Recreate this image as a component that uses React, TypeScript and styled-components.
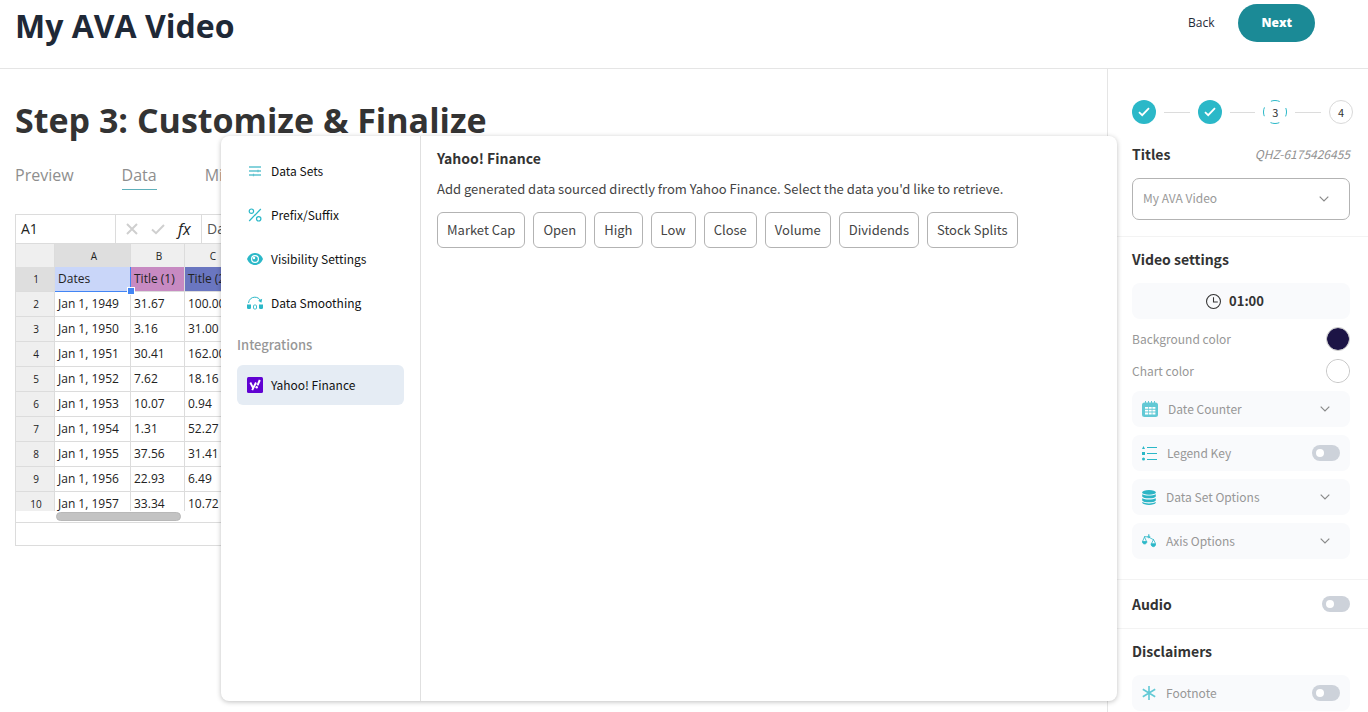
import React from 'react';
import styled, { createGlobalStyle, css } from 'styled-components';

const teal = '#2bb8c8';
const sans = "'Open Sans', 'Noto Sans', sans-serif";
const ui = "'Noto Sans CJK JP', 'Noto Sans', sans-serif";

const GlobalStyle = createGlobalStyle`
  *, *::before, *::after { box-sizing: border-box; }
  body { margin: 0; background: #fff; color: #333; font: 12px/20px ${ui}; }
  button, input, select { font: inherit; color: inherit; margin: 0; }
  button { background: none; border: 0; padding: 0; cursor: pointer; }
  h1, h2, h3, p { margin: 0; }
  svg { display: block; flex: none; }
`;

const Page = styled.div`
  display: flex;
  flex-direction: column;
  min-height: 100vh;
`;

const Header = styled.header`
  display: flex;
  align-items: flex-start;
  justify-content: space-between;
  height: 69px;
  padding: 4px 53px 0 15px;
  border-bottom: 1px solid #e5e5e5;
`;

const VideoTitle = styled.h1`
  font: 700 32px/44px ${sans};
  color: #1f2937;
`;

const HeaderActions = styled.div`
  display: flex;
  align-items: center;
  gap: 24px;
  font: 12px/20px ${sans};
`;

const BackButton = styled.button`
  color: #1f2937;
`;

const NextButton = styled.button`
  height: 38px;
  padding: 0 23px;
  border-radius: 19px;
  background: #1b8a96;
  color: #fff;
  font-weight: 800;
`;

const Body = styled.div`
  position: relative;
  display: flex;
  flex: 1;
`;

const Workspace = styled.main`
  flex: 1;
  min-width: 0;
  padding: 28px 15px 0;
`;

const StepTitle = styled.h2`
  font: 700 34px/46px ${sans};
  color: #333;
`;

const Tabs = styled.nav`
  display: flex;
  gap: 48px;
  margin-top: 20px;
`;

const Tab = styled.a<{ $active?: boolean }>`
  font: 16px/24px ${sans};
  color: #8e8e8e;
  text-decoration: none;
  padding-bottom: 2px;
  border-bottom: 1px solid ${(p) => (p.$active ? '#5fb0bb' : 'transparent')};
`;

const Sheet = styled.section`
  margin-top: 24px;
  height: 332px;
  border: 1px solid #dcdcdc;
  font-family: ${sans};
  color: #222;
`;

const FormulaBar = styled.div`
  display: flex;
  align-items: center;
  height: 28px;
`;

const CellName = styled.div`
  width: 100px;
  padding-left: 5px;
  border-right: 1px solid #dcdcdc;
  font-size: 14px;
  line-height: 28px;
`;

const FormulaTools = styled.div`
  display: flex;
  align-items: center;
  gap: 13px;
  width: 86px;
  height: 28px;
  padding-left: 10px;
  border-right: 1px solid #dcdcdc;
`;

const Fx = styled.i`
  font: italic 500 16px/20px ${sans};
`;

const FormulaValue = styled.span`
  padding-left: 5px;
  font-size: 14px;
  color: #555;
`;

const SheetViewport = styled.div`
  height: 268px;
  overflow: hidden;
`;

const Grid = styled.table`
  width: 223px;
  table-layout: fixed;
  border-collapse: separate;
  border-spacing: 0;
`;

const ColumnHead = styled.th<{ $width: number; $selected?: boolean }>`
  width: ${(p) => p.$width}px;
  height: 24px;
  padding: 0 0 0 3px;
  border-top: 1px solid #dcdcdc;
  border-right: 1px solid #dcdcdc;
  background: ${(p) => (p.$selected ? '#dedede' : '#efefef')};
  font-size: 10px;
  font-weight: 400;
`;

const RowHead = styled.th<{ $selected?: boolean }>`
  padding: 0 0 0 2px;
  border-right: 1px solid #dcdcdc;
  border-bottom: 1px solid #dcdcdc;
  background: ${(p) => (p.$selected ? '#dedede' : '#efefef')};
  font-size: 10px;
  font-weight: 400;
`;

const Cell = styled.td<{ $fill?: string; $selected?: boolean }>`
  position: relative;
  height: 25px;
  padding: 0 0 0 3px;
  border-right: 1px solid #dcdcdc;
  border-bottom: 1px solid #dcdcdc;
  background: ${(p) => p.$fill ?? '#fff'};
  font-size: 12px;
  line-height: 22px;
  white-space: nowrap;
  ${(p) =>
    p.$selected &&
    css`
      border-right-color: #4285f4;
      border-bottom-color: #4285f4;
    `}
`;

const FillHandle = styled.span`
  position: absolute;
  right: -5px;
  bottom: -4px;
  z-index: 1;
  width: 8px;
  height: 8px;
  border: 1px solid #fff;
  background: #4285f4;
`;

const ScrollTrack = styled.div`
  height: 12px;
  padding: 1px 0 0 40px;
  border-bottom: 1px solid #dcdcdc;
`;

const ScrollThumb = styled.div`
  width: 125px;
  height: 9px;
  border: 1px solid #b8b8b8;
  border-radius: 5px;
  background: #c3c3c3;
`;

const Sidebar = styled.aside`
  flex: none;
  width: 261px;
  padding-top: 31px;
  border-left: 1px solid #e5e5e5;
`;

const Stepper = styled.ol`
  display: flex;
  align-items: center;
  gap: 8px;
  width: 221px;
  margin: 0 0 20px 24px;
  padding: 0;
  list-style: none;
`;

const Step = styled.li<{ $state: 'done' | 'current' | 'todo' }>`
  position: relative;
  display: grid;
  place-items: center;
  flex: none;
  width: 24px;
  height: 24px;
  border-radius: 50%;
  border: ${(p) => (p.$state === 'todo' ? '1px solid #d9d9d9' : '0')};
  background: ${(p) => (p.$state === 'done' ? teal : 'transparent')};
  font-size: 11px;
  line-height: 16px;
  color: #333;
`;

const StepRing = styled.svg`
  position: absolute;
  inset: 0;
`;

const StepLine = styled.li`
  flex: 1;
  height: 1px;
  background: #dcdcdc;
`;

const Section = styled.section<{ $divided?: boolean }>`
  display: flex;
  flex-direction: column;
  gap: 8px;
  padding: 0 18px 20px 24px;
  ${(p) =>
    p.$divided &&
    css`
      padding-top: 12px;
      border-top: 1px solid #f3f3f3;
    `}
`;

const TitleSection = styled(Section)`
  padding-bottom: 16px;
`;

const LastSection = styled(Section)`
  padding-bottom: 0;
`;

const AudioSection = styled(Section)`
  padding-bottom: 12px;
`;

const SectionHead = styled.div<{ $flat?: boolean }>`
  display: flex;
  align-items: center;
  justify-content: space-between;
  height: ${(p) => (p.$flat ? 24 : 20)}px;
  margin-bottom: ${(p) => (p.$flat ? 0 : 6)}px;
`;

const SectionTitle = styled.h3`
  font-size: 14px;
  line-height: 20px;
  font-weight: 700;
  color: #333;
`;

const Reference = styled.em`
  color: #929292;
`;

const SelectBox = styled.div`
  display: grid;
  align-items: center;
  & > * { grid-area: 1 / 1; }
  & > svg { justify-self: end; margin-right: 21px; pointer-events: none; }
`;

const TitleSelect = styled.select`
  appearance: none;
  width: 100%;
  height: 42px;
  padding: 0 32px 2px 10px;
  border: 1px solid #b3b3b3;
  border-radius: 7px;
  background: #fff;
  color: #999;
`;

const panel = css`
  display: flex;
  align-items: center;
  width: 100%;
  height: 36px;
  border-radius: 8px;
  background: #f9fafc;
`;

const Duration = styled.button`
  ${panel}
  justify-content: center;
  gap: 8px;
  padding-right: 12px;
  font-size: 13px;
  font-weight: 700;
  color: #333;
`;

const Option = styled.button`
  ${panel}
  gap: 10px;
  padding: 0 20px 0 10px;
  color: #979797;
`;

const ToggleOption = styled.label`
  ${panel}
  gap: 10px;
  padding: 0 10px;
  color: #979797;
`;

const OptionText = styled.span`
  flex: 1;
  text-align: left;
`;

const ColorRow = styled.label`
  display: flex;
  align-items: center;
  justify-content: space-between;
  height: 24px;
  color: #979797;
`;

const ColorInput = styled.input`
  appearance: none;
  width: 24px;
  height: 24px;
  padding: 0;
  border: 1px solid #c4c4c4;
  border-radius: 50%;
  background: none;
  overflow: hidden;
  &::-webkit-color-swatch-wrapper { padding: 0; }
  &::-webkit-color-swatch { border: 0; border-radius: 50%; }
`;

const Toggle = styled.input`
  appearance: none;
  flex: none;
  width: 28px;
  height: 16px;
  padding: 4px;
  border-radius: 8px;
  background: #cdd2da;
  &::before {
    content: '';
    display: block;
    width: 8px;
    height: 8px;
    border-radius: 50%;
    background: #fff;
  }
  &:checked { background: ${teal}; }
  &:checked::before { margin-left: auto; }
`;

const Dialog = styled.div`
  position: absolute;
  top: 67px;
  right: 251px;
  bottom: 11px;
  left: 221px;
  z-index: 2;
  display: flex;
  border-radius: 8px;
  background: #fff;
  box-shadow: 0 1px 5px rgba(0, 0, 0, 0.25);
`;

const DialogNav = styled.nav`
  display: flex;
  flex-direction: column;
  gap: 4px;
  width: 200px;
  padding: 15px 16px;
  border-right: 1px solid #e0e0e0;
`;

const NavItem = styled.button<{ $active?: boolean }>`
  display: flex;
  align-items: center;
  gap: 8px;
  height: 40px;
  padding: 0 10px;
  border-radius: 6px;
  background: ${(p) => (p.$active ? '#e5ecf4' : 'transparent')};
  color: #111;
`;

const NavLabel = styled.h3`
  margin: 8px 0 6px;
  font-size: 13px;
  line-height: 20px;
  font-weight: 500;
  color: #979797;
`;

const DialogContent = styled.div`
  flex: 1;
  padding: 12px 16px;
`;

const DialogTitle = styled.h2`
  font-size: 14px;
  line-height: 20px;
  font-weight: 700;
`;

const DialogText = styled.p`
  margin: 10px 0 12px;
  font-size: 13px;
  line-height: 22px;
  color: #444;
`;

const Fields = styled.div`
  display: flex;
  flex-wrap: wrap;
  gap: 8px;
`;

const FieldButton = styled.button`
  height: 36px;
  padding: 0 9px;
  border: 1px solid #b3b3b3;
  border-radius: 6px;
  font-size: 13px;
  color: #444;
`;

const Chevron = () => (
  <svg width="10" height="6" viewBox="0 0 10 6" fill="none" stroke="#8a8a8a" strokeWidth="1.2">
    <path d="M.7.7 5 5 9.3.7" />
  </svg>
);

const Check = () => (
  <svg width="12" height="10" viewBox="0 0 12 10" fill="none" stroke="#fff" strokeWidth="1.8">
    <path d="M1 5.2 4.2 8.2 11 1.2" />
  </svg>
);

const DataSetsIcon = () => (
  <svg width="16" height="16" viewBox="0 0 16 16" stroke="#5fc3cf" strokeWidth="1.4">
    <path d="M2 4h12M2 8h12M2 12h12" fill="none" />
    <path d="M11 6.700v2.600M6.500 10.700v2.600" strokeWidth="1.200" />
  </svg>
);

const PercentIcon = () => (
  <svg width="16" height="16" viewBox="0 0 16 16" fill="none" stroke={teal} strokeWidth="1.2">
    <circle cx="4.400" cy="4.200" r="2.200" />
    <circle cx="11.700" cy="11.800" r="2.200" />
    <path d="M13.800 2 2.200 14" />
  </svg>
);

const EyeIcon = () => (
  <svg width="16" height="16" viewBox="0 0 16 16">
    <path d="M0 8c1.400-3.700 4.400-6 8-6s6.600 2.300 8 6c-1.400 3.700-4.400 6-8 6S1.400 11.700 0 8Z" fill={teal} />
    <circle cx="8" cy="8" r="4" fill="#fff" />
    <circle cx="8" cy="8" r="2.800" fill={teal} />
    <circle cx="7" cy="7" r="1.200" fill="#fff" />
  </svg>
);

const SmoothingIcon = () => (
  <svg width="16" height="16" viewBox="0 0 16 16" fill={teal}>
    <path d="M1.500 8C2 4.200 4.600 2.200 7.800 2.200c2.600 0 4.600 1.300 5.600 3.400" fill="none" stroke={teal} />
    <path d="m15.200 3.800-.8 4-3.200-2Z" />
    <path d="M0 9.500h4v3.200a1.300 1.300 0 0 1-1.300 1.300H1.300A1.300 1.300 0 0 1 0 12.700ZM12 9.500h4v3.200a1.300 1.300 0 0 1-1.300 1.300h-1.400a1.300 1.300 0 0 1-1.300-1.300Z" />
    <rect x="6.500" y="10" width="3" height="4" rx="1" fill="none" stroke={teal} strokeWidth=".9" />
  </svg>
);

const YahooIcon = () => (
  <svg width="16" height="16" viewBox="0 0 16 16">
    <rect width="16" height="16" rx="1.500" fill="#6001d2" />
    <path d="m3.300 5.500 2.600 5.200M9 5.500l-3.800 7.700" stroke="#fff" strokeWidth="1.900" fill="none" />
    <path d="m12.800 3-2.300 5.400" stroke="#fff" strokeWidth="2" />
    <circle cx="9.700" cy="10.300" r="1.200" fill="#fff" />
  </svg>
);

const ClockIcon = () => (
  <svg width="15" height="15" viewBox="0 0 14 14" fill="none" stroke="#333" strokeWidth="1">
    <circle cx="7" cy="7" r="6.500" />
    <path d="M7 3v4.500h4" />
  </svg>
);

const CalendarIcon = () => (
  <svg width="16" height="16" viewBox="0 0 16 16">
    <path d="M3.500 0v3M6.500 0v3M9.500 0v3M12.500 0v3" stroke="#62c9d5" />
    <rect y="1.500" width="16" height="14.500" rx="2.500" fill="#62c9d5" />
    <path d="M3 6h3v1.800H3zM6.700 6h3v1.800h-3zM10.400 6h3v1.800h-3zM3 8.800h3v1.800H3zM6.700 8.800h3v1.800h-3zM10.400 8.800h3v1.800h-3zM3 11.600h3v1.800H3zM6.700 11.600h3v1.800h-3zM10.400 11.600h3v1.800h-3z" fill="#fff" />
  </svg>
);

const LegendIcon = () => (
  <svg width="15" height="15" viewBox="0 0 15 15" fill={teal}>
    <path d="M1.500 0 3 3H0ZM0 6h3v3H0Z" />
    <circle cx="1.500" cy="13" r="1.500" />
    <path d="M5 1.500h10M5 7.500h10M5 13.500h10" stroke={teal} />
  </svg>
);

const DatabaseIcon = () => (
  <svg width="14" height="15" viewBox="0 0 14 15" fill="#2db5c5">
    <ellipse cx="7" cy="2.400" rx="6.800" ry="2.300" />
    <path d="M.2 4.200c2.800 1.800 10.800 1.800 13.600 0v2.200c-1 2.600-12.600 2.600-13.600 0ZM.2 8.200c2.800 1.800 10.800 1.800 13.600 0v2.200c-1 2.600-12.600 2.600-13.600 0ZM.2 12.100c2.800 1.800 10.800 1.800 13.600 0v.7c-1 2.800-12.600 2.800-13.600 0Z" />
  </svg>
);

const ScalesIcon = () => (
  <svg width="14" height="14" viewBox="0 0 14 14" fill="none" stroke={teal} strokeWidth=".8">
    <path d="M2 2.500 6.500 3 12 6M6.800 0v3M2.500 3 .5 7.500M2.500 3l2 4.500M11.500 5.500l-2 4M11.500 5.500l2 4" />
    <circle cx="6.800" cy="2.800" r="1" />
    <path d="M.3 7.500h4.600c0 3.300-4.600 3.300-4.600 0ZM9 9.700h4.700c0 4-4.700 4-4.700 0Z" fill={teal} />
  </svg>
);

const AsteriskIcon = () => (
  <svg width="14" height="16" viewBox="0 0 14 16" stroke="#62c9d5" strokeWidth="1.6">
    <path d="M7 1v14M.8 4.200l12.400 7.600M13.200 4.200.8 11.800" />
  </svg>
);

const rows = [
  ['Jan 1, 1949', '31.67', '100.00'],
  ['Jan 1, 1950', '3.16', '31.00'],
  ['Jan 1, 1951', '30.41', '162.00'],
  ['Jan 1, 1952', '7.62', '18.16'],
  ['Jan 1, 1953', '10.07', '0.94'],
  ['Jan 1, 1954', '1.31', '52.27'],
  ['Jan 1, 1955', '37.56', '31.41'],
  ['Jan 1, 1956', '22.93', '6.49'],
  ['Jan 1, 1957', '33.34', '10.72'],
];

const fields = ['Market Cap', 'Open', 'High', 'Low', 'Close', 'Volume', 'Dividends', 'Stock Splits'];

const navItems = [
  { label: 'Data Sets', Icon: DataSetsIcon },
  { label: 'Prefix/Suffix', Icon: PercentIcon },
  { label: 'Visibility Settings', Icon: EyeIcon },
  { label: 'Data Smoothing', Icon: SmoothingIcon },
];

const Spreadsheet = () => (
  <Sheet>
    <FormulaBar>
      <CellName>A1</CellName>
      <FormulaTools>
        <svg width="12" height="12" viewBox="0 0 12 12" stroke="#cfcfcf" strokeWidth="2">
          <path d="m1 1 10 10M11 1 1 11" />
        </svg>
        <svg width="14" height="12" viewBox="0 0 14 12" fill="none" stroke="#cfcfcf" strokeWidth="2">
          <path d="m1 6.500 4 3.700L13 2" />
        </svg>
        <Fx>fx</Fx>
      </FormulaTools>
      <FormulaValue>Dates</FormulaValue>
    </FormulaBar>
    <SheetViewport>
      <Grid>
        <thead>
          <tr>
            <ColumnHead $width={39} />
            <ColumnHead $width={76} $selected>A</ColumnHead>
            <ColumnHead $width={54}>B</ColumnHead>
            <ColumnHead $width={54}>C</ColumnHead>
          </tr>
        </thead>
        <tbody>
          <tr>
            <RowHead $selected>1</RowHead>
            <Cell $fill="#c9d6f9" $selected>
              Dates
              <FillHandle />
            </Cell>
            <Cell $fill="#c78ac2">Title (1)</Cell>
            <Cell $fill="#6a76c0">Title (2)</Cell>
          </tr>
          {rows.map((row, i) => (
            <tr key={row[0]}>
              <RowHead>{i + 2}</RowHead>
              {row.map((value) => (
                <Cell key={value}>{value}</Cell>
              ))}
            </tr>
          ))}
        </tbody>
      </Grid>
    </SheetViewport>
    <ScrollTrack>
      <ScrollThumb />
    </ScrollTrack>
  </Sheet>
);

export default function App() {
  return (
    <Page>
      <GlobalStyle />
      <Header>
        <VideoTitle>My AVA Video</VideoTitle>
        <HeaderActions>
          <BackButton>Back</BackButton>
          <NextButton>Next</NextButton>
        </HeaderActions>
      </Header>
      <Body>
        <Workspace>
          <StepTitle>Step 3: Customize &amp; Finalize</StepTitle>
          <Tabs>
            <Tab href="#preview">Preview</Tab>
            <Tab href="#data" $active>Data</Tab>
            <Tab href="#misc">Misc</Tab>
          </Tabs>
          <Spreadsheet />
        </Workspace>

        <Sidebar>
          <Stepper>
            <Step $state="done"><Check /></Step>
            <StepLine />
            <Step $state="done"><Check /></Step>
            <StepLine />
            <Step $state="current">
              <StepRing width="24" height="24" viewBox="0 0 24 24" fill="none" stroke={teal}>
                <circle cx="12" cy="12" r="11.500" strokeDasharray="9 9.060" strokeDashoffset="4.500" />
              </StepRing>
              3
            </Step>
            <StepLine />
            <Step $state="todo">4</Step>
          </Stepper>

          <TitleSection>
            <SectionHead>
              <SectionTitle>Titles</SectionTitle>
              <Reference>QHZ-6175426455</Reference>
            </SectionHead>
            <SelectBox>
              <TitleSelect aria-label="Titles">
                <option>My AVA Video</option>
              </TitleSelect>
              <Chevron />
            </SelectBox>
          </TitleSection>

          <Section $divided>
            <SectionHead>
              <SectionTitle>Video settings</SectionTitle>
            </SectionHead>
            <Duration>
              <ClockIcon />
              01:00
            </Duration>
            <ColorRow>
              Background color
              <ColorInput type="color" defaultValue="#1c1445" />
            </ColorRow>
            <ColorRow>
              Chart color
              <ColorInput type="color" defaultValue="#ffffff" />
            </ColorRow>
            <Option>
              <CalendarIcon />
              <OptionText>Date Counter</OptionText>
              <Chevron />
            </Option>
            <ToggleOption>
              <LegendIcon />
              <OptionText>Legend Key</OptionText>
              <Toggle type="checkbox" />
            </ToggleOption>
            <Option>
              <DatabaseIcon />
              <OptionText>Data Set Options</OptionText>
              <Chevron />
            </Option>
            <Option>
              <ScalesIcon />
              <OptionText>Axis Options</OptionText>
              <Chevron />
            </Option>
          </Section>

          <AudioSection $divided>
            <SectionHead $flat>
              <SectionTitle id="audio-title">Audio</SectionTitle>
              <Toggle type="checkbox" aria-labelledby="audio-title" />
            </SectionHead>
          </AudioSection>

          <LastSection $divided>
            <SectionHead>
              <SectionTitle>Disclaimers</SectionTitle>
            </SectionHead>
            <ToggleOption>
              <AsteriskIcon />
              <OptionText>Footnote</OptionText>
              <Toggle type="checkbox" />
            </ToggleOption>
          </LastSection>
        </Sidebar>

        <Dialog role="dialog" aria-label="Data tools">
          <DialogNav>
            {navItems.map(({ label, Icon }) => (
              <NavItem key={label}>
                <Icon />
                {label}
              </NavItem>
            ))}
            <NavLabel>Integrations</NavLabel>
            <NavItem $active>
              <YahooIcon />
              Yahoo! Finance
            </NavItem>
          </DialogNav>
          <DialogContent>
            <DialogTitle>Yahoo! Finance</DialogTitle>
            <DialogText>
              Add generated data sourced directly from Yahoo Finance. Select the data you'd like to retrieve.
            </DialogText>
            <Fields>
              {fields.map((field) => (
                <FieldButton key={field}>{field}</FieldButton>
              ))}
            </Fields>
          </DialogContent>
        </Dialog>
      </Body>
    </Page>
  );
}
